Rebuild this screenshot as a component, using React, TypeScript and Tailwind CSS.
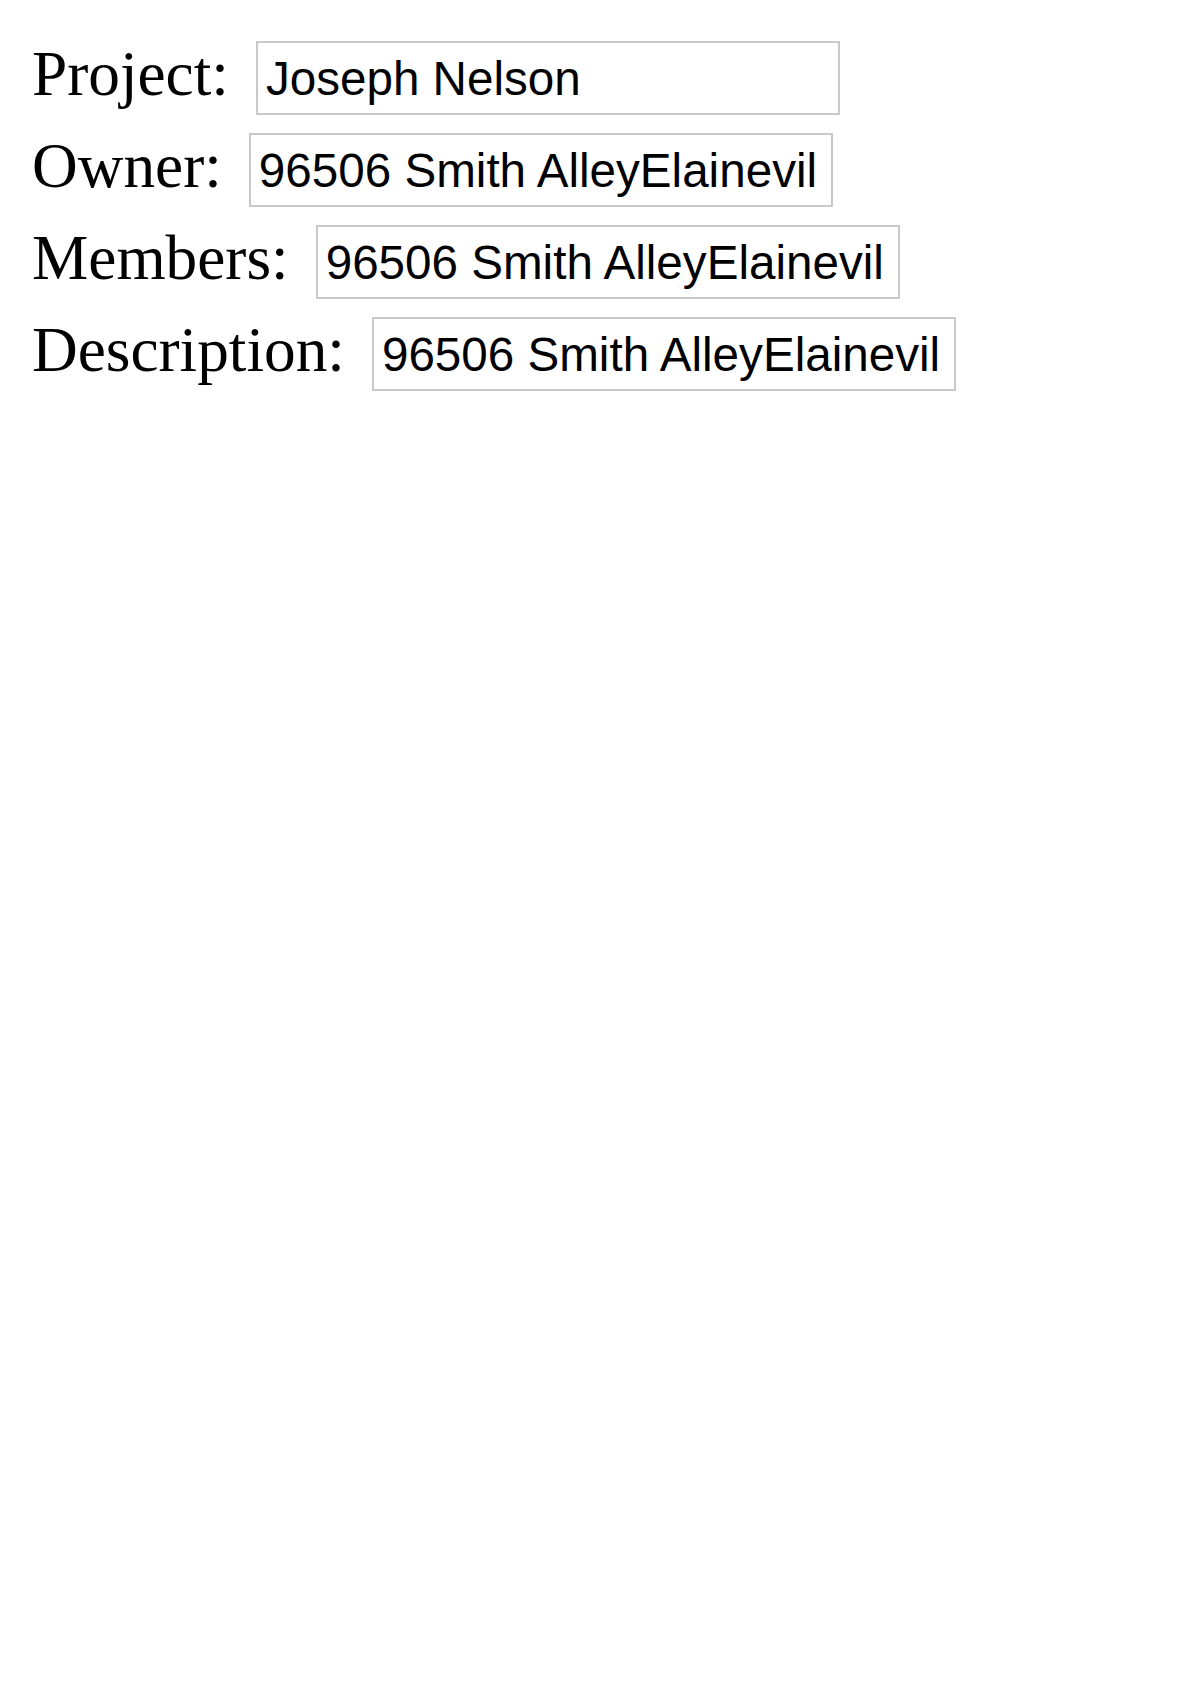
import React from 'react';

type Field = { label: string; value: string };

const fields: Field[] = [
  { label: 'Project:', value: 'Joseph Nelson' },
  { label: 'Owner:', value: '96506 Smith AlleyElainevil' },
  { label: 'Members:', value: '96506 Smith AlleyElainevil' },
  { label: 'Description:', value: '96506 Smith AlleyElainevil' },
];

export default function App() {
  return (
    <div className="min-h-screen bg-white pl-8 pt-[41px] flex flex-col gap-[18px]">
      {fields.map((field) => (
        <div key={field.label} className="flex items-baseline h-[74px]">
          <span className="font-['Liberation_Serif','Times_New_Roman',serif] text-[63.3px] leading-none text-black">
            {field.label}
          </span>
          <input
            type="text"
            readOnly
            value={field.value}
            className="ml-[27px] w-[584px] h-[74px] border-2 border-[#c9c9c9] px-[8px] font-['Liberation_Sans',Arial,sans-serif] text-[47.6px] text-black outline-none"
          />
        </div>
      ))}
    </div>
  );
}
